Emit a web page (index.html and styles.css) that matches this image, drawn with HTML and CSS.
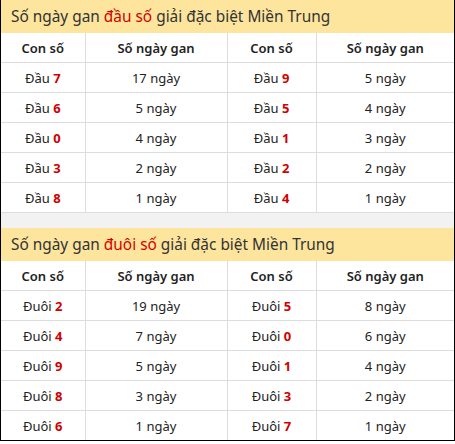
FILE: index.html
```html
<!DOCTYPE html>
<html lang="vi">
<head>
<meta charset="utf-8">
<link rel="stylesheet" href="styles.css">
</head>
<body>
<div class="box">
  <div class="title">Số ngày gan <span class="hl">đầu số</span> giải đặc biệt Miền Trung</div>
  <table class="tbl">
    <colgroup><col class="c1"><col class="c2"><col class="c3"><col class="c4"></colgroup>
    <tr><th>Con số</th><th>Số ngày gan</th><th>Con số</th><th>Số ngày gan</th></tr>
    <tr><td>Đầu <b>7</b></td><td>17 ngày</td><td>Đầu <b>9</b></td><td>5 ngày</td></tr>
    <tr><td>Đầu <b>6</b></td><td>5 ngày</td><td>Đầu <b>5</b></td><td>4 ngày</td></tr>
    <tr><td>Đầu <b>0</b></td><td>4 ngày</td><td>Đầu <b>1</b></td><td>3 ngày</td></tr>
    <tr><td>Đầu <b>3</b></td><td>2 ngày</td><td>Đầu <b>2</b></td><td>2 ngày</td></tr>
    <tr><td>Đầu <b>8</b></td><td>1 ngày</td><td>Đầu <b>4</b></td><td>1 ngày</td></tr>
  </table>
  <div class="gap"></div>
  <div class="title">Số ngày gan <span class="hl">đuôi số</span> giải đặc biệt Miền Trung</div>
  <table class="tbl">
    <colgroup><col class="c1"><col class="c2"><col class="c3"><col class="c4"></colgroup>
    <tr><th>Con số</th><th>Số ngày gan</th><th>Con số</th><th>Số ngày gan</th></tr>
    <tr><td>Đuôi <b>2</b></td><td>19 ngày</td><td>Đuôi <b>5</b></td><td>8 ngày</td></tr>
    <tr><td>Đuôi <b>4</b></td><td>7 ngày</td><td>Đuôi <b>0</b></td><td>6 ngày</td></tr>
    <tr><td>Đuôi <b>9</b></td><td>5 ngày</td><td>Đuôi <b>1</b></td><td>4 ngày</td></tr>
    <tr><td>Đuôi <b>8</b></td><td>3 ngày</td><td>Đuôi <b>3</b></td><td>2 ngày</td></tr>
    <tr><td>Đuôi <b>6</b></td><td>1 ngày</td><td>Đuôi <b>7</b></td><td>1 ngày</td></tr>
  </table>
</div>
</body>
</html>
```

FILE: styles.css
```css
html, body {
  margin: 0;
  padding: 0;
  background: #fff;
}
.box {
  width: 453px;
  border: 1px solid #000;
  border-top: none;
  font-family: "Noto Sans", "Open Sans", sans-serif;
  color: #222;
}
.title {
  height: 33px;
  line-height: 34px;
  background: #fde59d;
  padding-left: 10px;
  font-size: 15.4px;
  color: #333;
  white-space: nowrap;
  overflow: hidden;
}
.hl {
  color: #d20000;
}
.tbl {
  width: 100%;
  border-collapse: collapse;
  table-layout: fixed;
  font-size: 13px;
}
.c1 { width: 84px; }
.c2 { width: 142px; }
.c3 { width: 89px; }
.c4 { width: auto; }
.tbl th, .tbl td {
  height: 29px;
  padding: 0;
  text-align: center;
  border: 1px solid #ddd;
  font-weight: normal;
}
.tbl th {
  font-weight: 600;
}
.tbl tr > :first-child { border-left: none; }
.tbl tr > :last-child { border-right: none; }
.tbl tr:first-child > * { border-top: none; }
.tbl tr:last-child > * { border-bottom: none; }
.tbl b {
  color: #d20000;
  font-weight: bold;
}
.gap {
  height: 15px;
  background: #f2f2f2;
  border-top: 1px solid #ddd;
}
```
